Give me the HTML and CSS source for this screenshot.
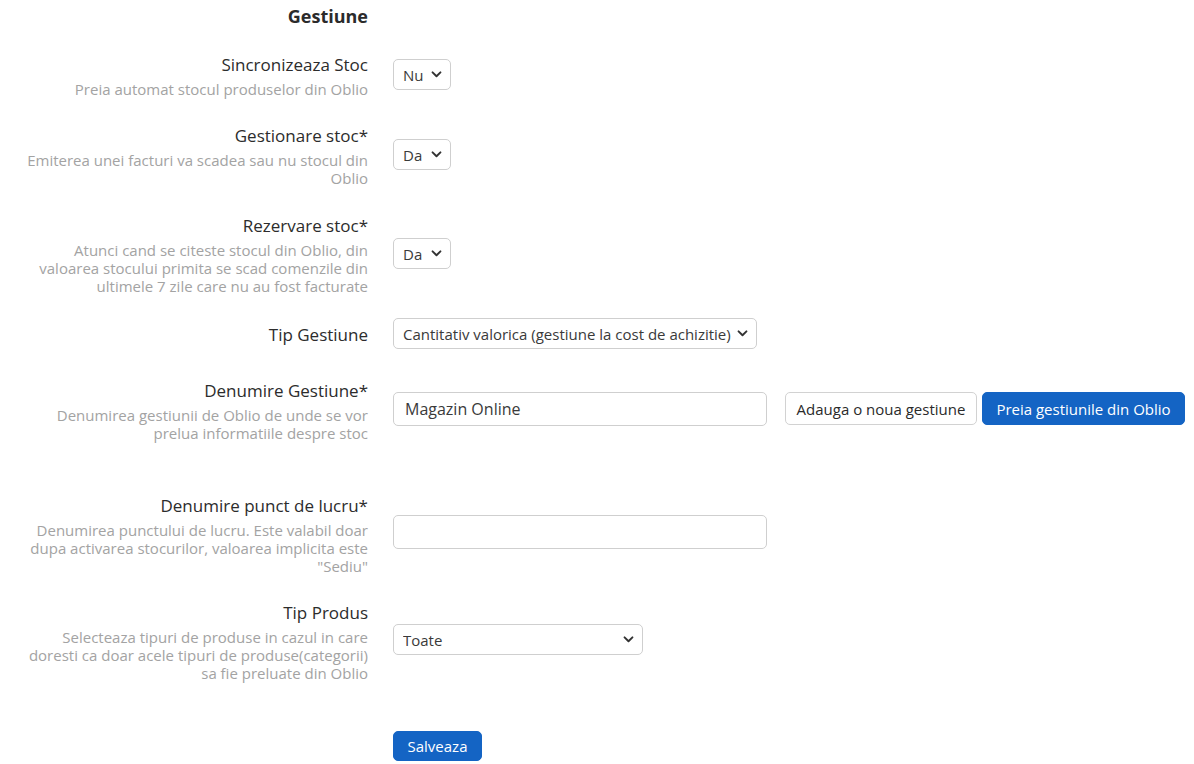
FILE: index.html
```html
<!DOCTYPE html>
<html lang="ro">
<head>
<meta charset="utf-8">
<title>Gestiune</title>
<link rel="stylesheet" href="styles.css">
</head>
<body>
<div class="page">
  <h3 class="heading">Gestiune</h3>

  <div class="row">
    <div class="label-col">
      <div class="label">Sincronizeaza Stoc</div>
      <div class="desc">Preia automat stocul produselor din Oblio</div>
    </div>
    <div class="control-col">
      <select class="select w-small"><option>Nu</option></select>
    </div>
  </div>

  <div class="row row-manage">
    <div class="label-col">
      <div class="label">Gestionare stoc*</div>
      <div class="desc">Emiterea unei facturi va scadea sau nu stocul din Oblio</div>
    </div>
    <div class="control-col">
      <select class="select w-small"><option>Da</option></select>
    </div>
  </div>

  <div class="row row-reserve">
    <div class="label-col">
      <div class="label">Rezervare stoc*</div>
      <div class="desc">Atunci cand se citeste stocul din Oblio, din valoarea stocului primita se scad comenzile din ultimele 7 zile care nu au fost facturate</div>
    </div>
    <div class="control-col">
      <select class="select w-small"><option>Da</option></select>
    </div>
  </div>

  <div class="row row-type">
    <div class="label-col">
      <div class="label">Tip Gestiune</div>
    </div>
    <div class="control-col">
      <select class="select w-wide"><option>Cantitativ valorica (gestiune la cost de achizitie)</option></select>
    </div>
  </div>

  <div class="row row-extra">
    <div class="label-col">
      <div class="label">Denumire Gestiune*</div>
      <div class="desc">Denumirea gestiunii de Oblio de unde se vor prelua informatiile despre stoc</div>
    </div>
    <div class="control-col control-raised">
      <input class="input" type="text" value="Magazin Online">
      <button class="btn btn-light">Adauga o noua gestiune</button>
      <button class="btn btn-primary btn-fetch">Preia gestiunile din Oblio</button>
    </div>
  </div>

  <div class="row">
    <div class="label-col">
      <div class="label">Denumire punct de lucru*</div>
      <div class="desc">Denumirea punctului de lucru. Este valabil doar dupa activarea stocurilor, valoarea implicita este "Sediu"</div>
    </div>
    <div class="control-col">
      <input class="input input-lower" type="text" value="">
    </div>
  </div>

  <div class="row">
    <div class="label-col">
      <div class="label">Tip Produs</div>
      <div class="desc">Selecteaza tipuri de produse in cazul in care doresti ca doar acele tipuri de produse(categorii) sa fie preluate din Oblio</div>
    </div>
    <div class="control-col">
      <select class="select select-lower w-mid"><option>Toate</option></select>
    </div>
  </div>

  <div class="actions">
    <button class="btn btn-primary btn-save">Salveaza</button>
  </div>
</div>
</body>
</html>
```

FILE: styles.css
```css
* { box-sizing: border-box; }

html, body {
  margin: 0;
  padding: 0;
  background: #ffffff;
}

body {
  font-family: "Open Sans", "Noto Sans", sans-serif;
  color: #2f2f2f;
}

.page {
  padding-top: 4px;
  padding-left: 23px;
}

.heading {
  width: 345px;
  margin: 0 0 25px 0;
  text-align: right;
  font-size: 18px;
  font-weight: 700;
  line-height: 24px;
  color: #2b2b2b;
}

.row {
  display: flex;
  align-items: center;
  gap: 25px;
  margin-bottom: 26px;
}

.row-manage { margin-bottom: 27px; }
.row-reserve { margin-bottom: 25px; }
.row-type { margin-bottom: 30px; }
.row-extra { margin-bottom: 52px; }

.label-col {
  width: 345px;
  flex: 0 0 345px;
  text-align: right;
}

.label {
  font-size: 17px;
  line-height: 24px;
  color: #2c2c2c;
}

.desc {
  margin-top: 3px;
  font-size: 15px;
  line-height: 18px;
  color: #a3a3a3;
}

.control-col {
  display: flex;
  align-items: center;
}

.control-raised { margin-top: -4px; }

.select {
  -webkit-appearance: none;
  appearance: none;
  height: 31px;
  padding: 0 24px 0 9px;
  font-family: "Open Sans", "Noto Sans", sans-serif;
  font-size: 15px;
  color: #3a3a3a;
  background-color: #ffffff;
  background-image: url("data:image/svg+xml,%3Csvg xmlns='http://www.w3.org/2000/svg' width='12' height='8' viewBox='0 0 12 8'%3E%3Cpath d='M1.5 1.5 L6 6 L10.5 1.5' fill='none' stroke='%23333' stroke-width='2.2' stroke-linecap='round' stroke-linejoin='round'/%3E%3C/svg%3E");
  background-repeat: no-repeat;
  background-position: right 8px center;
  background-size: 11px 7px;
  border: 1px solid #cfcfcf;
  border-radius: 5px;
  outline: none;
  margin-top: -2px;
}

.select-lower { margin-top: -4px; }

.w-small { width: 58px; }
.w-wide { width: 364px; }
.w-mid { width: 250px; }

.input {
  width: 374px;
  height: 34px;
  padding: 0 11px;
  font-family: "Open Sans", "Noto Sans", sans-serif;
  font-size: 16px;
  color: #3a3a3a;
  background: #ffffff;
  border: 1px solid #cfcfcf;
  border-radius: 5px;
  outline: none;
}

.input-lower { margin-top: -5px; }

.btn {
  height: 33px;
  padding: 0;
  font-family: "Open Sans", "Noto Sans", sans-serif;
  font-size: 15px;
  white-space: nowrap;
  text-align: center;
  border-radius: 5px;
  cursor: pointer;
}

.btn-light {
  margin-left: 18px;
  width: 192px;
  background: #ffffff;
  color: #2a2a2a;
  border: 1px solid #d2d2d2;
}

.btn-primary {
  background: #1464c4;
  color: #ffffff;
  border: 1px solid #1464c4;
}

.btn-fetch {
  margin-left: 5px;
  width: 203px;
}

.actions {
  padding-left: 370px;
  margin-top: 49px;
}

.btn-save {
  width: 89px;
  height: 30px;
  font-size: 15px;
}
```
